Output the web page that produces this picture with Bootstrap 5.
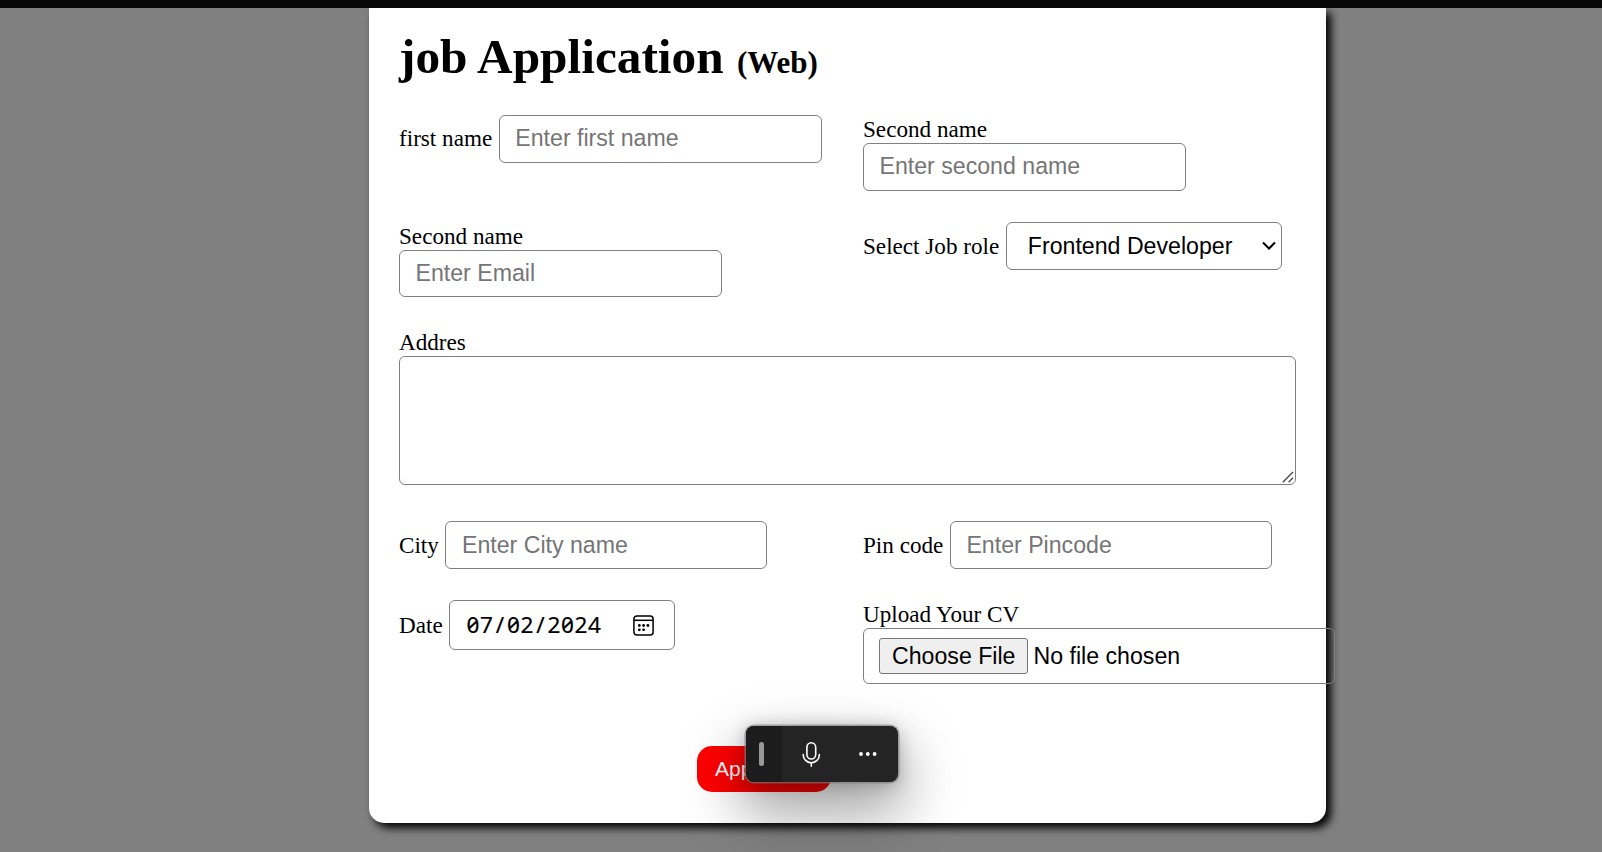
<!DOCTYPE html>
<html lang="en">
<head>
<meta charset="utf-8">
<meta name="viewport" content="width=device-width, initial-scale=1">
<title>Job Application</title>
<link href="https://cdn.jsdelivr.net/npm/bootstrap@5.3.0/dist/css/bootstrap.min.css" rel="stylesheet">
<style>
body{height:852px;overflow:hidden;background:#808080;color:#000;font:23.15px/26px "Liberation Serif",serif}
.topbar{height:8px;background:#080808;position:relative}
.sheet{width:957px;height:815px;margin-left:369px;padding:0 30px 31px;background:#fff;border-radius:0 0 15px 15px;box-shadow:5px 5px 9px #000}
h1{font-size:49.3px;line-height:56px;font-weight:700;margin:0;padding-top:21px;height:107px;white-space:nowrap}
h1 small{font-size:31px;font-weight:700;margin-left:1px}
.fields{display:grid;grid-template-columns:433px 433px;column-gap:31px;grid-template-rows:76px 75px 162px 48px 84px;row-gap:31px}
.wide{grid-column:1/-1}
.inline-field{display:flex;align-items:baseline;align-self:start;white-space:nowrap;gap:6.6px}
.stack-field{display:flex;flex-direction:column;align-items:flex-start}
.stack-field label{height:28px;padding-top:1px}
.box{border:1px solid #808080;border-radius:6px;background:transparent;color:#000;font:23.15px/26px "Liberation Sans",sans-serif;padding:0 15.5px 1px;width:323px;height:48px;flex:none}
.box::placeholder{color:#757575;opacity:1}
.short{height:47px}
.lowered{width:322px;padding:1px 15.5px 0}
.role-box{position:relative}
.role-box select{width:276px;padding:0 0 0 21px;appearance:none;display:block}
.role-box svg{position:absolute;right:6px;top:18px;pointer-events:none}
.addr-box{position:relative}
.addr-box textarea{width:897px;height:129px;display:block;resize:none}
.addr-box svg{position:absolute;right:2px;bottom:2px}
.date-box{width:226px;height:50px;font:22.6px/48px "Noto Sans",sans-serif;font-feature-settings:"zero";padding:0 20px 0 16px;display:flex;align-items:center;justify-content:space-between}
.date-box i{display:inline-block;width:13.5px;font-style:normal;text-align:center}
.date-box span{-webkit-text-stroke:.2px #000}
.file-box{width:472px;height:56px;padding:9px 15px;line-height:36px}
.file-box::file-selector-button{font:23.15px/30px "Liberation Sans",sans-serif;color:#000;background:#efefef;border:1px solid #767676;border-radius:3px;padding:2px 12px;margin:0 5px 0 0;height:36px}
.apply{width:134px;height:46px;background:#f00;color:#fff;border:0;border-radius:15px;font:21px/46px "Liberation Sans",sans-serif;padding:0 0 0 18px;text-align:left;margin:62px 0 0 298px;display:block}
.voice{position:absolute;left:746px;top:726px;width:152px;height:56px;border-radius:8px;background:#242424;box-shadow:0 0 0 1.6px rgba(125,125,125,.6),0 26px 56px 6px rgba(0,0,0,.36),0 2px 18px rgba(0,0,0,.26)}
.grip{width:36px;background:#1c1c1c;border-radius:8px 0 0 8px}
.grip span{width:5px;height:24px;border-radius:2.5px;background:#999;margin-right:5px}
</style>
</head>
<body>
<div class="topbar"></div>
<main class="sheet">
<h1>job Application <small>(Web)</small></h1>
<form>
<div class="fields">
<div class="inline-field"><label for="first">first name</label><input class="box" id="first" placeholder="Enter first name"></div>
<div class="stack-field"><label for="second">Second name</label><input class="box" id="second" placeholder="Enter second name"></div>
<div class="stack-field"><label for="mail">Second name</label><input class="box short" id="mail" placeholder="Enter Email"></div>
<div class="inline-field"><label for="role">Select Job role</label><div class="role-box"><select class="box" id="role"><option>Frontend Developer</option></select><svg width="14" height="12" viewBox="0 0 14 12" fill="none" stroke="#000" stroke-width="2"><path d="M1 2.5l6 6 6-6"/></svg></div></div>
<div class="stack-field wide"><label for="addr">Addres</label><div class="addr-box"><textarea class="box" id="addr"></textarea><svg width="12" height="12" viewBox="0 0 12 12" stroke="#444" stroke-width="1.3"><path d="M.8 11.2L11 1M6.6 11.2L11 6.8"/></svg></div></div>
<div class="inline-field"><label for="city">City</label><input class="box lowered" id="city" placeholder="Enter City name"></div>
<div class="inline-field"><label for="pin">Pin code</label><input class="box lowered" id="pin" placeholder="Enter Pincode"></div>
<div class="inline-field"><label>Date</label><div class="box date-box"><span><i>0</i><i>7</i><i>/</i><i>0</i><i>2</i><i>/</i><i>2</i><i>0</i><i>2</i><i>4</i></span>
<svg width="21" height="21" viewBox="0 0 21 21" fill="none" stroke="#000" stroke-width="1.5"><rect x=".9" y=".9" width="19.2" height="19.2" rx="3"/><path d="M1 5.3h19"/><g fill="#000" stroke="none"><circle cx="6.3" cy="10.5" r="1.4"/><circle cx="10.6" cy="10.5" r="1.4"/><circle cx="14.9" cy="10.5" r="1.4"/><circle cx="6.3" cy="14.8" r="1.4"/><circle cx="10.6" cy="14.8" r="1.4"/></g></svg></div></div>
<div class="stack-field"><label for="cv">Upload Your CV</label><input type="file" class="box file-box" id="cv"></div>
</div>
<button type="button" class="apply">Apply Now</button>
</form>
</main>
<div class="voice d-flex">
<div class="grip d-flex align-items-center justify-content-center"><span></span></div>
<div class="d-flex flex-fill align-items-center">
<svg width="116" height="56" viewBox="0 0 116 56" fill="none" stroke="#fff" stroke-width="1.6" stroke-linecap="round"><rect x="24.9" y="16.8" width="8.8" height="16.2" rx="4.4"/><path d="M21.2 28.5v.2a8.1 8.1 0 0 0 16.2 0v-.2M29.3 36.9v3.4"/><g fill="#fff" stroke="none"><circle cx="79" cy="28" r="1.9"/><circle cx="85.8" cy="28" r="1.9"/><circle cx="92.6" cy="28" r="1.9"/></g></svg>
</div>
</div>
<script src="https://cdn.jsdelivr.net/npm/bootstrap@5.3.0/dist/js/bootstrap.bundle.min.js"></script>
</body>
</html>
